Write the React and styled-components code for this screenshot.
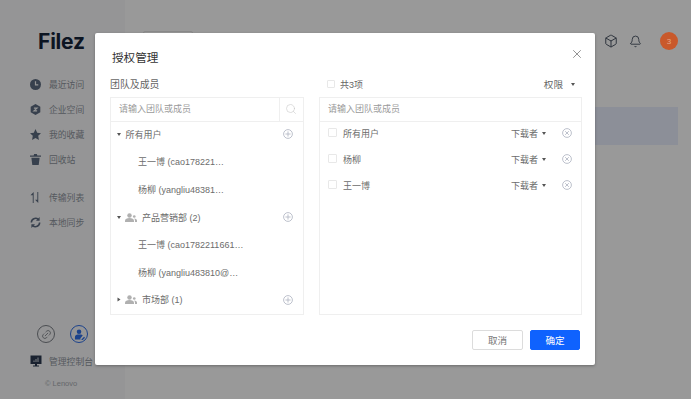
import React from "react";
import styled, { createGlobalStyle } from "styled-components";
import { Box, Bell, Link2, X, Search } from "lucide-react";

const Global = createGlobalStyle`
  html, body { margin: 0; padding: 0; background: #fff; }
  body { font-family: "Liberation Sans", "Noto Sans CJK SC", sans-serif; }
  * { box-sizing: border-box; }
`;

const Page = styled.div`
  position: relative;
  width: 691px;
  height: 399px;
  display: flex;
  overflow: hidden;
  background: #fff;
`;

const Sidebar = styled.aside`
  width: 125px;
  flex: none;
  display: flex;
  flex-direction: column;
  background: #f9f9fa;
  padding-top: 31px;
`;

const Logo = styled.div`
  margin-left: 38px;
  height: 22px;
  font: 700 21px/22px "Inter", "Liberation Sans", sans-serif;
  letter-spacing: -0.2px;
  color: #14233a;
`;

const NavGroup = styled.nav`
  display: flex;
  flex-direction: column;
  margin-top: ${(p) => p.$top}px;
`;

const NavItem = styled.div`
  height: 25px;
  display: flex;
  align-items: center;
  padding-left: 30px;
  gap: 8px;
  font-size: 8.8px;
  color: #8f959e;
  svg { flex: none; }
`;

const SideBottom = styled.div`
  margin-top: auto;
  display: flex;
  flex-direction: column;
`;

const CircleRow = styled.div`
  display: flex;
  gap: 15px;
  padding-left: 37px;
`;

const CircleBtn = styled.div`
  width: 18px;
  height: 18px;
  border-radius: 50%;
  border: 1px solid ${(p) => p.$color};
  color: ${(p) => p.$color};
  display: flex;
  align-items: center;
  justify-content: center;
`;

const TiltedLink = styled(Link2)`
  transform: rotate(-45deg);
`;

const Console = styled.div`
  display: flex;
  align-items: center;
  gap: 7px;
  padding-left: 30px;
  margin-top: 11px;
  height: 14px;
  font-size: 8.8px;
  color: #8f959e;
`;

const Copy = styled.div`
  margin: 11px 0 10px 45px;
  height: 10px;
  line-height: 10px;
  font-size: 7.5px;
  color: #a9adb3;
`;

const Main = styled.main`
  flex: 1;
  display: flex;
  flex-direction: column;
  padding-right: 13px;
`;

const Header = styled.header`
  height: 107px;
  padding-top: 32px;
  display: flex;
  align-items: flex-start;
  color: #3f4a5a;
`;

const HeaderSearch = styled.div`
  width: 50px;
  height: 20px;
  margin: -1px 0 0 18px;
  border: 1px solid #e6e6e6;
  border-radius: 2px;
`;

const HeaderIcons = styled.div`
  margin-left: auto;
  display: flex;
  align-items: center;
  height: 18px;
`;

const BellIcon = styled(Bell)`
  margin-left: 11px;
`;

const Badge = styled.div`
  position: relative;
  z-index: 2;
  width: 18px;
  height: 18px;
  margin-left: 18px;
  border-radius: 50%;
  background: #c9592b;
  color: #e6a888;
  font-size: 8px;
  display: flex;
  align-items: center;
  justify-content: center;
`;

const SelectedRow = styled.div`
  height: 38px;
  background: #e9effe;
`;

const Overlay = styled.div`
  position: absolute;
  inset: 0;
  background: rgba(0, 0, 0, 0.4);
`;

const Dialog = styled.section`
  position: absolute;
  left: 95px;
  top: 33px;
  width: 500px;
  height: 332px;
  background: #fff;
  border-radius: 2px;
  box-shadow: 0 1px 3px rgba(0, 0, 0, 0.3);
  padding: 0 13px 0 15px;
  display: flex;
  flex-direction: column;
  color: #555;
`;

const Title = styled.div`
  height: 42.5px;
  padding: 5px 0 0 2px;
  display: flex;
  align-items: center;
  justify-content: space-between;
  font-size: 11.6px;
  color: #333;
  svg { margin: -6px -1.5px 0 0; color: #666; }
`;

const Columns = styled.div`
  display: grid;
  grid-template-columns: 193.5px 263px;
  gap: 15.5px;
`;

const Column = styled.div`
  display: flex;
  flex-direction: column;
`;

const ColHead = styled.div`
  height: 17px;
  margin-bottom: 4.5px;
  display: flex;
  align-items: center;
  font-size: ${(p) => (p.$big ? 9.9 : 9)}px;
  color: #666;
`;

const Spacer = styled.div`
  margin-left: auto;
  display: flex;
  align-items: center;
  gap: 4px;
  font-size: 9.6px;
  padding-right: 7px;
`;

const Panel = styled.div`
  height: 218px;
  border: 1px solid #efefef;
  display: flex;
  flex-direction: column;
`;

const SearchRow = styled.div`
  height: 23.5px;
  flex: none;
  border-bottom: 1px solid #efefef;
  display: flex;
  align-items: center;
  font-size: 9px;
  color: #9a9a9a;
`;

const SearchText = styled.div`
  flex: 1;
  padding: 0 0 1px 8px;
`;

const SearchBtn = styled.div`
  width: 23.5px;
  height: 100%;
  border-left: 1px solid #efefef;
  display: flex;
  align-items: center;
  justify-content: center;
  color: #c4c4c4;
`;

const TreeList = styled.div`
  display: flex;
  flex-direction: column;
`;

const TreeRow = styled.div`
  height: 27.6px;
  margin-top: ${(p) => (p.$first ? -1 : 0)}px;
  display: flex;
  align-items: center;
  padding-left: ${(p) => (p.$leaf ? 27 : 5.5)}px;
  padding-right: 9.5px;
  font-size: 9px;
  color: #6c6c6c;
`;

const Caret = styled.span`
  width: 0;
  height: 0;
  flex: none;
  display: inline-block;
  border-left: 2.5px solid transparent;
  border-right: 2.5px solid transparent;
  border-top: 3px solid #555;
  transform: ${(p) => (p.$right ? "rotate(-90deg)" : "none")};
  margin: ${(p) => p.$m || "0"};
`;

const GroupLabel = styled.span`
  margin-left: ${(p) => (p.$group ? 5.5 : 0)}px;
`;

const RoundIconWrap = styled.svg`
  width: 10px;
  height: 10px;
  flex: none;
  margin-left: ${(p) => (p.$auto ? "auto" : "0")};
  fill: none;
  stroke: #b6bac6;
  stroke-width: 0.9;
`;

const Check = styled.span`
  width: 9px;
  height: 9px;
  flex: none;
  margin-top: -2px;
  border: 1px solid #e8e8e8;
  border-radius: 1px;
  background: #fff;
`;

const HeadCheck = styled(Check)`
  width: 8.5px;
  height: 8.5px;
  margin: 0 5px 0 7.5px;
`;

const MemberRow = styled.div`
  height: 26px;
  margin-top: ${(p) => (p.$first ? -1.5 : 0)}px;
  display: flex;
  align-items: center;
  padding: 0 9px 0 8px;
  font-size: 9px;
  color: #6c6c6c;
`;

const MemberName = styled.span`
  margin-left: 6px;
`;

const Role = styled.span`
  margin-left: auto;
  display: flex;
  align-items: center;
  gap: 4px;
  margin-right: 16px;
`;

const Footer = styled.div`
  display: flex;
  justify-content: flex-end;
  gap: 7px;
  padding: 15px 2px 0 0;
`;

const Button = styled.button`
  width: ${(p) => (p.$primary ? 50 : 51)}px;
  height: 20px;
  padding: 0;
  border-radius: 2px;
  font: 9.6px "Liberation Sans", "Noto Sans CJK SC", sans-serif;
  border: 1px solid ${(p) => (p.$primary ? "#0f62fe" : "#dcdcdc")};
  background: ${(p) => (p.$primary ? "#0f62fe" : "#fff")};
  color: ${(p) => (p.$primary ? "#fff" : "#777")};
`;

const Clock = () => (
  <svg width="11" height="11" viewBox="0 0 24 24"><circle cx="12" cy="12" r="12" fill="#5d6b80" /><path d="M12 5v8h6" stroke="#f9f9fa" strokeWidth="2.6" fill="none" /></svg>
);
const Hex = () => (
  <svg width="11" height="11" viewBox="0 0 24 24"><path d="M12 0l10.5 6v12L12 24 1.500 18V6z" fill="#5d6b80" /><path d="M8.500 9h7l-7 6h7" stroke="#f9f9fa" strokeWidth="2.400" fill="none" /></svg>
);
const Star = () => (
  <svg width="11" height="11" viewBox="0 0 24 24"><path d="M12 0l3.700 8 8.300 1-6.100 5.700L19.500 24 12 19.500 4.500 24l1.600-9.300L0 9l8.300-1z" fill="#5d6b80" /></svg>
);
const Trash = () => (
  <svg width="11" height="11" viewBox="0 0 24 24"><path d="M9 0h6l1 3h8v3H0V3h8zM3 8h18l-2 16H5z" fill="#5d6b80" /></svg>
);
const Transfer = () => (
  <svg width="11" height="11" viewBox="0 0 24 24"><path d="M6 24V7H1l7-7v24zM16 0v17h-5l7 7V0z" fill="#5d6b80" /></svg>
);
const Sync = () => (
  <svg width="11" height="11" viewBox="0 0 24 24" fill="none"><path d="M3 12a9 9 0 0 1 15-6.700M21 12a9 9 0 0 1-15 6.700" stroke="#5d6b80" strokeWidth="3.400" /><path d="M21 0v8h-8zM3 24v-8h8z" fill="#5d6b80" /></svg>
);
const UserShield = () => (
  <svg width="11" height="11" viewBox="0 0 24 24" fill="#2f6fe8"><circle cx="11" cy="6" r="5" /><path d="M2 23v-5c0-4 3-6 6-6h6c2 0 4 1 5 2l-5 6v3z" /><path d="M16 23l6-6 2 2-6 6z" /></svg>
);
const Monitor = () => (
  <svg width="12" height="12" viewBox="0 0 24 24"><path d="M1 1h22v17H14v3h4v2H6v-2h4v-3H1z" fill="#2c3a50" /><path d="M7 14v-3h2v3zM11 14V8h2v6zM15 14V5h2v9z" fill="#cfd4dc" /></svg>
);
const People = () => (
  <svg width="12" height="9" viewBox="0 0 24 18" fill="#b0b0b0"><circle cx="9" cy="5" r="4.500" /><path d="M0 18v-3c0-3 4-5 9-5s9 2 9 5v3z" /><circle cx="18.500" cy="7" r="2.700" /><path d="M20 18v-3c0-1.500-.6-3-2-4 3 0 6 1.500 6 4v3z" /></svg>
);
const PlusCircle = () => (
  <RoundIconWrap $auto viewBox="0 0 10 10"><circle cx="5" cy="5" r="4.400" /><path d="M5 2.400v5.200M2.400 5h5.200" /></RoundIconWrap>
);
const CrossCircle = () => (
  <RoundIconWrap viewBox="0 0 10 10"><circle cx="5" cy="5" r="4.400" /><path d="M3.200 3.200l3.600 3.600M6.800 3.200l-3.600 3.600" /></RoundIconWrap>
);

const nav1 = [[Clock, "最近访问"], [Hex, "企业空间"], [Star, "我的收藏"], [Trash, "回收站"]];
const nav2 = [[Transfer, "传输列表"], [Sync, "本地同步"]];
const tree = [
  { label: "所有用户" },
  { label: "王一博 (cao178221…", leaf: true },
  { label: "杨柳 (yangliu48381…", leaf: true },
  { label: "产品营销部 (2)", group: true },
  { label: "王一博 (cao1782211661…", leaf: true },
  { label: "杨柳 (yangliu483810@…", leaf: true },
  { label: "市场部 (1)", group: true, closed: true },
];
const members = ["所有用户", "杨柳", "王一博"];

export default function App() {
  return (
    <Page>
      <Global />
      <Sidebar>
        <Logo>Filez</Logo>
        <NavGroup $top={19}>
          {nav1.map(([I, t]) => <NavItem key={t}><I />{t}</NavItem>)}
        </NavGroup>
        <NavGroup $top={13}>
          {nav2.map(([I, t]) => <NavItem key={t}><I />{t}</NavItem>)}
        </NavGroup>
        <SideBottom>
          <CircleRow>
            <CircleBtn $color="#7d8188"><TiltedLink size={11} strokeWidth={1.8} /></CircleBtn>
            <CircleBtn $color="#2f6fe8"><UserShield /></CircleBtn>
          </CircleRow>
          <Console><Monitor />管理控制台</Console>
          <Copy>© Lenovo</Copy>
        </SideBottom>
      </Sidebar>
      <Main>
        <Header>
          <HeaderSearch />
          <HeaderIcons>
            <Box size={14} strokeWidth={1.6} />
            <BellIcon size={13} strokeWidth={1.6} />
            <Badge>3</Badge>
          </HeaderIcons>
        </Header>
        <SelectedRow />
      </Main>
      <Overlay />
      <Dialog>
        <Title>授权管理<X size={14} strokeWidth={1.2} /></Title>
        <Columns>
          <Column>
            <ColHead $big>团队及成员</ColHead>
            <Panel>
              <SearchRow>
                <SearchText>请输入团队或成员</SearchText>
                <SearchBtn><Search size={12} strokeWidth={1.1} /></SearchBtn>
              </SearchRow>
              <TreeList>
                {tree.map((r, i) => (
                  <TreeRow key={r.label} $leaf={r.leaf} $first={i === 0}>
                    {!r.leaf && <Caret $right={r.closed} $m={r.group ? "0 4px 0 0" : "0 5px 0 0"} />}
                    {r.group && <People />}
                    <GroupLabel $group={r.group}>{r.label}</GroupLabel>
                    {!r.leaf && <PlusCircle />}
                  </TreeRow>
                ))}
              </TreeList>
            </Panel>
          </Column>
          <Column>
            <ColHead>
              <HeadCheck />
              共3项
              <Spacer>权限<Caret $m="0 0 0 4px" /></Spacer>
            </ColHead>
            <Panel>
              <SearchRow><SearchText>请输入团队或成员</SearchText></SearchRow>
              <TreeList>
                {members.map((m, i) => (
                  <MemberRow key={m} $first={i === 0}>
                    <Check />
                    <MemberName>{m}</MemberName>
                    <Role>下载者<Caret /></Role>
                    <CrossCircle />
                  </MemberRow>
                ))}
              </TreeList>
            </Panel>
          </Column>
        </Columns>
        <Footer>
          <Button>取消</Button>
          <Button $primary>确定</Button>
        </Footer>
      </Dialog>
    </Page>
  );
}
